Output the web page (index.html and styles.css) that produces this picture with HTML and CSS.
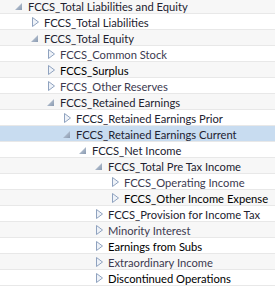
FILE: index.html
```html
<!DOCTYPE html>
<html>
<head>
<meta charset="utf-8">
<link rel="stylesheet" href="styles.css">
</head>
<body>
<svg width="0" height="0" class="defs">
  <defs>
    <linearGradient id="gexp" x1="0" y1="0" x2="1" y2="1">
      <stop offset="0" stop-color="#c8d3e0"/>
      <stop offset="1" stop-color="#8a9ab0"/>
    </linearGradient>
  </defs>
</svg>
<div class="tree">
  <div class="row lvl-0"><span class="tw exp"><svg width="7" height="7" viewBox="0 0 7 7"><polygon points="7,0 7,7 0,7" fill="url(#gexp)"/></svg></span><span class="label">FCCS_Total Liabilities and Equity</span></div>
  <div class="row lvl-1"><span class="tw col"><svg width="7" height="10" viewBox="0 0 7 10"><polygon points="0.5,0.5 6.5,5 0.5,9.5" fill="#eef2f8" stroke="#8fa2bf"/></svg></span><span class="label">FCCS_Total Liabilities</span></div>
  <div class="row lvl-1"><span class="tw exp"><svg width="7" height="7" viewBox="0 0 7 7"><polygon points="7,0 7,7 0,7" fill="url(#gexp)"/></svg></span><span class="label">FCCS_Total Equity</span></div>
  <div class="row lvl-2"><span class="tw col"><svg width="7" height="10" viewBox="0 0 7 10"><polygon points="0.5,0.5 6.5,5 0.5,9.5" fill="#eef2f8" stroke="#8fa2bf"/></svg></span><span class="label light">FCCS_Common Stock</span></div>
  <div class="row lvl-2"><span class="tw col"><svg width="7" height="10" viewBox="0 0 7 10"><polygon points="0.5,0.5 6.5,5 0.5,9.5" fill="#eef2f8" stroke="#8fa2bf"/></svg></span><span class="label dark">FCCS_Surplus</span></div>
  <div class="row lvl-2"><span class="tw col"><svg width="7" height="10" viewBox="0 0 7 10"><polygon points="0.5,0.5 6.5,5 0.5,9.5" fill="#eef2f8" stroke="#8fa2bf"/></svg></span><span class="label light">FCCS_Other Reserves</span></div>
  <div class="row lvl-2"><span class="tw exp"><svg width="7" height="7" viewBox="0 0 7 7"><polygon points="7,0 7,7 0,7" fill="url(#gexp)"/></svg></span><span class="label">FCCS_Retained Earnings</span></div>
  <div class="row lvl-3"><span class="tw col"><svg width="7" height="10" viewBox="0 0 7 10"><polygon points="0.5,0.5 6.5,5 0.5,9.5" fill="#eef2f8" stroke="#8fa2bf"/></svg></span><span class="label">FCCS_Retained Earnings Prior</span></div>
  <div class="row lvl-3 selected"><span class="tw exp"><svg width="7" height="7" viewBox="0 0 7 7"><polygon points="7,0 7,7 0,7" fill="url(#gexp)"/></svg></span><span class="label">FCCS_Retained Earnings Current</span></div>
  <div class="row lvl-4"><span class="tw exp"><svg width="7" height="7" viewBox="0 0 7 7"><polygon points="7,0 7,7 0,7" fill="url(#gexp)"/></svg></span><span class="label">FCCS_Net Income</span></div>
  <div class="row lvl-5"><span class="tw exp"><svg width="7" height="7" viewBox="0 0 7 7"><polygon points="7,0 7,7 0,7" fill="url(#gexp)"/></svg></span><span class="label">FCCS_Total Pre Tax Income</span></div>
  <div class="row lvl-6"><span class="tw col"><svg width="7" height="10" viewBox="0 0 7 10"><polygon points="0.5,0.5 6.5,5 0.5,9.5" fill="#eef2f8" stroke="#8fa2bf"/></svg></span><span class="label light">FCCS_Operating Income</span></div>
  <div class="row lvl-6"><span class="tw col"><svg width="7" height="10" viewBox="0 0 7 10"><polygon points="0.5,0.5 6.5,5 0.5,9.5" fill="#eef2f8" stroke="#8fa2bf"/></svg></span><span class="label dark">FCCS_Other Income Expense</span></div>
  <div class="row lvl-5"><span class="tw col"><svg width="7" height="10" viewBox="0 0 7 10"><polygon points="0.5,0.5 6.5,5 0.5,9.5" fill="#eef2f8" stroke="#8fa2bf"/></svg></span><span class="label">FCCS_Provision for Income Tax</span></div>
  <div class="row lvl-5"><span class="tw col"><svg width="7" height="10" viewBox="0 0 7 10"><polygon points="0.5,0.5 6.5,5 0.5,9.5" fill="#eef2f8" stroke="#8fa2bf"/></svg></span><span class="label light">Minority Interest</span></div>
  <div class="row lvl-5"><span class="tw col"><svg width="7" height="10" viewBox="0 0 7 10"><polygon points="0.5,0.5 6.5,5 0.5,9.5" fill="#eef2f8" stroke="#8fa2bf"/></svg></span><span class="label dark">Earnings from Subs</span></div>
  <div class="row lvl-5"><span class="tw col"><svg width="7" height="10" viewBox="0 0 7 10"><polygon points="0.5,0.5 6.5,5 0.5,9.5" fill="#eef2f8" stroke="#8fa2bf"/></svg></span><span class="label light">Extraordinary Income</span></div>
  <div class="row lvl-5"><span class="tw col"><svg width="7" height="10" viewBox="0 0 7 10"><polygon points="0.5,0.5 6.5,5 0.5,9.5" fill="#eef2f8" stroke="#8fa2bf"/></svg></span><span class="label dark">Discontinued Operations</span></div>
</div>
</body>
</html>
```

FILE: styles.css
```css
html, body {
  margin: 0;
  padding: 0;
  background: #ffffff;
  overflow: hidden;
}
.defs {
  position: absolute;
}
.tree {
  margin-top: -2px;
  font-family: "Lato", "Liberation Sans", sans-serif;
  font-size: 11.2px;
  color: #222230;
}
.row {
  display: flex;
  align-items: center;
  height: 15px;
  border-bottom: 1px solid #e8e8e8;
  white-space: nowrap;
}
.row:nth-child(odd) {
  background: #f7f7f7;
}
.row.selected {
  background: #c8dcf0;
}
.lvl-0 { padding-left: 16px; }
.lvl-1 { padding-left: 32px; }
.lvl-2 { padding-left: 48px; }
.lvl-3 { padding-left: 64px; }
.lvl-4 { padding-left: 80px; }
.lvl-5 { padding-left: 96px; }
.lvl-6 { padding-left: 112px; }
.tw {
  width: 12px;
  flex: none;
  display: flex;
  align-items: center;
}
.tw svg { display: block; }
.tw.exp svg { margin-left: -1px; margin-top: 1px; }
.label { line-height: 15px; padding-top: 1px; }
.label.dark { color: #000000; }
.label.light { color: #3c3a50; }
```
